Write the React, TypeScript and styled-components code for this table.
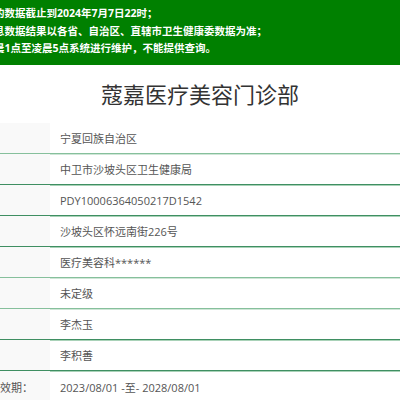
import React from "react";
import styled, { createGlobalStyle } from "styled-components";

const Global = createGlobalStyle`
  html, body { margin: 0; padding: 0; background: #fff; overflow: hidden; }
  body { font-family: "Open Sans", "Noto Sans CJK SC", sans-serif; }
`;

const Page = styled.div`
  width: 400px;
  height: 400px;
  overflow: hidden;
`;

const Notice = styled.div`
  background: #008000;
  color: #fff;
  font-weight: bold;
  font-size: 10.5px;
  line-height: 17.5px;
  padding: 5px 0 7px;
  height: 53px;
`;

const NoticeLine = styled.div`
  white-space: nowrap;
  margin-left: -6px;
`;

const Title = styled.h1`
  margin: 0;
  height: 58px;
  display: flex;
  align-items: center;
  justify-content: center;
  font-size: 22px;
  font-weight: normal;
  color: #333;
  font-family: "Open Sans", "Noto Sans CJK SC", sans-serif;
  padding-bottom: 2px;
  box-sizing: border-box;
`;

const Table = styled.div`
  display: flex;
  flex-direction: column;
`;

const Row = styled.div<{ $light?: boolean }>`
  display: grid;
  grid-template-columns: 50px 1fr;
  height: 31px;
  box-sizing: border-box;
  border-bottom: 1px solid ${(p) => (p.$light ? "#86c09c" : "#3f8f62")};
  box-shadow: 0 1px 0 ${(p) => (p.$light ? "#cfe6d7" : "#a9d2b8")};
  position: relative;
  &:last-child { border-bottom: none; box-shadow: none; }
`;

const Label = styled.div`
  background: #f9f9f9;
  display: flex;
  align-items: center;
  justify-content: flex-end;
  padding-right: 17px;
  white-space: nowrap;
  font-size: 11px;
  color: #555;
  overflow: visible;
`;

const Value = styled.div`
  display: flex;
  align-items: center;
  padding-left: 10px;
  font-size: 11px;
  color: #555;
  white-space: nowrap;
`;

const rows: { label: string; value: string; light?: boolean }[] = [
  { label: "", value: "宁夏回族自治区", light: true },
  { label: "", value: "中卫市沙坡头区卫生健康局" },
  { label: "", value: "PDY10006364050217D1542" },
  { label: "", value: "沙坡头区怀远南街226号" },
  { label: "", value: "医疗美容科******", light: true },
  { label: "", value: "未定级", light: true },
  { label: "", value: "李杰玉" },
  { label: "", value: "李积善" },
  { label: "效期：", value: "2023/08/01 -至- 2028/08/01" },
];

export default function App() {
  return (
    <Page>
      <Global />
      <Notice>
        <NoticeLine>的数据截止到2024年7月7日22时；</NoticeLine>
        <NoticeLine>息数据结果以各省、自治区、直辖市卫生健康委数据为准；</NoticeLine>
        <NoticeLine>晨1点至凌晨5点系统进行维护，不能提供查询。</NoticeLine>
      </Notice>
      <Title>蔻嘉医疗美容门诊部</Title>
      <Table>
        {rows.map((r, i) => (
          <Row key={i} $light={r.light}>
            <Label>{r.label}</Label>
            <Value>{r.value}</Value>
          </Row>
        ))}
      </Table>
    </Page>
  );
}
